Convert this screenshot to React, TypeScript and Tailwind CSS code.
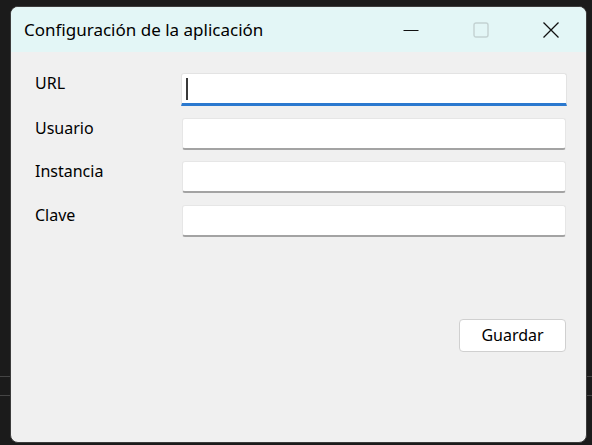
import React from "react";

const fields = ["URL", "Usuario", "Instancia", "Clave"];

function TitleButtons() {
  return (
    <div className="flex items-center h-full">
      <div className="w-[70px] h-full flex items-center justify-center">
        <svg width="16" height="16" viewBox="0 0 16 16">
          <line x1="0.5" y1="8.5" x2="15.5" y2="8.5" stroke="#111" strokeWidth="1" />
        </svg>
      </div>
      <div className="w-[70px] h-full flex items-center justify-center">
        <svg width="16" height="16" viewBox="0 0 16 16">
          <rect x="1" y="1" width="14" height="14" rx="2" fill="none" stroke="#c3d2d2" strokeWidth="1.4" />
        </svg>
      </div>
      <div className="w-[70px] h-full flex items-center justify-center">
        <svg width="16" height="16" viewBox="0 0 16 16">
          <path d="M0.5 0.5 L15.5 15.5 M15.5 0.5 L0.5 15.5" stroke="#111" strokeWidth="1.3" fill="none" />
        </svg>
      </div>
    </div>
  );
}

function Field({ label, focused }: { label: string; focused?: boolean }) {
  return (
    <div className="flex items-start">
      <div className="w-[147px] leading-[20px] text-[16px] text-black">{label}</div>
      {focused ? (
        <div className="flex-1 h-[33px] -ml-[1px] -mr-[1px] bg-white border border-[#e3e3e3] border-b-[3px] border-b-[#2b79cf] rounded-t-[3px] flex items-center pl-[4px]">
          <div className="w-[2px] h-[22px] bg-[#3a3a3a]" />
        </div>
      ) : (
        <div className="flex-1 h-[32px] bg-white border border-[#e6e6e6] border-b-[2px] border-b-[#a3a3a3] rounded-[3px]" />
      )}
    </div>
  );
}

export default function App() {
  return (
    <div
      className="relative w-[592px] h-[445px] bg-[#1b1b1b] pt-[6px] pl-[10px] overflow-hidden"
      style={{ fontFamily: '"Noto Sans", "Open Sans", sans-serif' }}
    >
      <div className="absolute left-0 right-0 top-[376px] h-[1px] bg-[#454545]" />
      <div className="absolute left-0 right-0 top-[395px] h-[1px] bg-[#454545]" />
      <div className="relative z-10 w-[577px] h-[437px] rounded-[8px] border border-[#3c3c3c] bg-[#f0f0f0] overflow-hidden flex flex-col">
        <div className="h-[45px] bg-[#e3f6f6] flex items-center justify-between">
          <div className="pl-[13px] text-[17px] text-black leading-none pb-[1px]">Configuración de la aplicación</div>
          <div className="h-full">
            <TitleButtons />
          </div>
        </div>
        <div className="flex-1 pl-[24px] pr-[20px] pt-[21px] flex flex-col">
          <div className="flex flex-col gap-[11.5px]">
            {fields.map((f, i) => (
              <Field key={f} label={f} focused={i === 0} />
            ))}
          </div>
          <div className="flex justify-end mt-[82px]">
            <button className="w-[107px] h-[33px] bg-white border border-[#d0d0d0] rounded-[4px] text-[16px] text-black leading-none">
              Guardar
            </button>
          </div>
        </div>
      </div>
    </div>
  );
}
